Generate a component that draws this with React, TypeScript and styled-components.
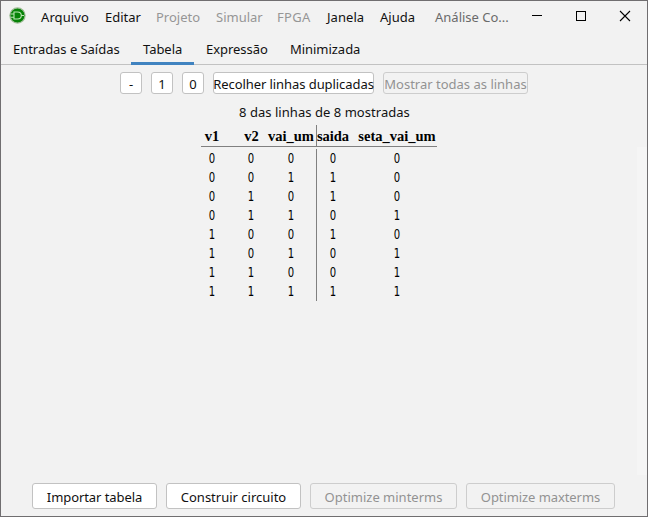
import React from "react";
import styled, { createGlobalStyle, css } from "styled-components";

const GlobalStyle = createGlobalStyle`
  * { box-sizing: border-box; }
  body { margin: 0; background: #f2f2f2; overflow: hidden; }
`;

const Window = styled.div`
  display: flex;
  flex-direction: column;
  width: 648px;
  height: 517px;
  border: 1px solid #706e70;
  background: #f2f2f2;
  color: #111;
  font: 13px/18px "Noto Sans", sans-serif;
  white-space: nowrap;
`;

const TitleBar = styled.header`
  display: flex;
  height: 32px;
  padding-left: 8px;
`;

const AppIcon = styled.svg`
  width: 17px;
  height: 17px;
  margin: 6px 15px 0 0;
`;

const MenuItem = styled.span<{ $width: number; $disabled?: boolean; $spacing?: number }>`
  flex: none;
  width: ${(p) => p.$width}px;
  padding-top: 7px;
  letter-spacing: ${(p) => p.$spacing ?? 0}px;
  color: ${(p) => (p.$disabled ? "#969696" : "#111")};
`;

const WindowTitle = styled.span`
  flex: none;
  width: 79px;
  padding-top: 7px;
  color: #6a6a6a;
`;

const WindowButton = styled.button`
  flex: none;
  width: 44px;
  height: 30px;
  padding: 0;
  border: 0;
  background: none;
  svg { display: block; margin: 0 auto; }
`;

const TabBar = styled.nav`
  display: flex;
  height: 32px;
  border-bottom: 1px solid #c2c2c2;
`;

const Tab = styled.div<{ $width: number; $active?: boolean }>`
  width: ${(p) => p.$width}px;
  height: 32px;
  padding: 7px 0 0 12px;
  letter-spacing: -0.04px;
  ${(p) => p.$active && css`
    border-bottom: 3px solid #4083c0;
  `}
`;

const FilterBar = styled.div`
  display: flex;
  gap: 9px;
  margin: 7px 0 0 119px;
`;

const Button = styled.button<{ $width: number; $spacing?: number }>`
  display: flex;
  justify-content: center;
  flex: none;
  width: ${(p) => p.$width}px;
  height: 22px;
  padding: 2px 0 0;
  border: 1px solid #c2c2c2;
  border-radius: 3px;
  background: #fff;
  color: #111;
  font: inherit;
  letter-spacing: ${(p) => p.$spacing ?? 0}px;
  &:disabled {
    border-color: #cdcdcd;
    background: #f2f2f2;
    color: #929292;
  }
`;

const ActionButton = styled(Button)`
  height: 26px;
  padding-top: 4px;
`;

const Status = styled.div`
  margin: 9px 0 0 238px;
  letter-spacing: 0.04px;
`;

const Content = styled.main`
  display: flex;
  flex: none;
  height: 353px;
  justify-content: space-between;
`;

const TruthTable = styled.div`
  width: 236px;
  margin: 4px 0 0 200px;
`;

const TableRow = styled.div<{ $header?: boolean }>`
  display: grid;
  grid-template-columns: 22px 43px 50px 33px 88px;
  height: 19px;
  ${(p) => p.$header && css`
    height: 22px;
    margin-bottom: 2px;
    border-bottom: 1px solid #808080;
    font: bold 14.5px/22px "Liberation Serif", serif;
    color: #000;
  `}
`;

const Cell = styled.div`
  display: flex;
  justify-content: center;
  &:nth-child(2) { padding-left: 14px; }
  &:nth-child(4) { border-left: 1px solid #808080; }
  &:nth-child(5) { padding-left: 8px; }
`;

const Bit = styled.span`
  color: #000;
  font: 14px/19px "DejaVu Sans Condensed", "DejaVu Sans", sans-serif;
  transform: scaleX(0.8);
`;

const ScrollTrack = styled.div`
  width: 10px;
  height: 328px;
  margin-top: 26px;
  background: #f5f5f5;
`;

const Actions = styled.footer`
  display: flex;
  gap: 9px;
  margin: 9px 0 0 31px;
`;

const menus = [
  { label: "Arquivo", width: 64, spacing: 0.1 },
  { label: "Editar", width: 51 },
  { label: "Projeto", width: 60, disabled: true },
  { label: "Simular", width: 61, disabled: true },
  { label: "FPGA", width: 50, disabled: true, spacing: 0.3 },
  { label: "Janela", width: 53, spacing: 0.05 },
  { label: "Ajuda", width: 55 },
];

const columns = ["v1", "v2", "vai_um", "saida", "seta_vai_um"];
const rows = ["00000", "00110", "01010", "01101", "10010", "10101", "11001", "11111"];

export default function App() {
  return (
    <>
      <GlobalStyle />
      <Window>
        <TitleBar>
          <AppIcon viewBox="0 0 17 17">
            <circle cx="8.5" cy="8.5" r="7.6" fill="#078307" stroke="#a0bd97" strokeWidth="1.2" />
            <path d="M5 5H8.5C11 5 12.3 6.7 12.3 8.5S11 12 8.5 12H5ZM2 7H5M2 10.2H5M12.3 8.5H15" fill="none" stroke="#bce5b4" strokeWidth="1.1" />
          </AppIcon>
          {menus.map((m) => (
            <MenuItem key={m.label} $width={m.width} $disabled={m.disabled} $spacing={m.spacing}>
              {m.label}
            </MenuItem>
          ))}
          <WindowTitle>Análise Co...</WindowTitle>
          <WindowButton aria-label="Minimizar">
            <svg width="44" height="30"><path d="M18 14.5H28" stroke="#000" /></svg>
          </WindowButton>
          <WindowButton aria-label="Maximizar">
            <svg width="44" height="30"><rect x="18.5" y="10.5" width="9" height="9" fill="none" stroke="#000" /></svg>
          </WindowButton>
          <WindowButton aria-label="Fechar">
            <svg width="44" height="30"><path d="M18 10L28 20M28 10L18 20" stroke="#000" strokeWidth="1.1" /></svg>
          </WindowButton>
        </TitleBar>
        <TabBar>
          <Tab $width={130}>Entradas e Saídas</Tab>
          <Tab $width={63} $active>Tabela</Tab>
          <Tab $width={84}>Expressão</Tab>
          <Tab $width={95}>Minimizada</Tab>
        </TabBar>
        <FilterBar>
          <Button $width={22}>-</Button>
          <Button $width={22}>1</Button>
          <Button $width={22}>0</Button>
          <Button $width={161} $spacing={-0.07}>Recolher linhas duplicadas</Button>
          <Button $width={145} disabled>Mostrar todas as linhas</Button>
        </FilterBar>
        <Status>8 das linhas de 8 mostradas</Status>
        <Content>
          <TruthTable>
            <TableRow $header>
              {columns.map((c) => <Cell key={c}>{c}</Cell>)}
            </TableRow>
            {rows.map((bits) => (
              <TableRow key={bits}>
                {bits.split("").map((bit, i) => <Cell key={i}><Bit>{bit}</Bit></Cell>)}
              </TableRow>
            ))}
          </TruthTable>
          <ScrollTrack />
        </Content>
        <Actions>
          <ActionButton $width={125} $spacing={-0.08}>Importar tabela</ActionButton>
          <ActionButton $width={135}>Construir circuito</ActionButton>
          <ActionButton $width={147} disabled>Optimize minterms</ActionButton>
          <ActionButton $width={149} $spacing={-0.08} disabled>Optimize maxterms</ActionButton>
        </Actions>
      </Window>
    </>
  );
}
